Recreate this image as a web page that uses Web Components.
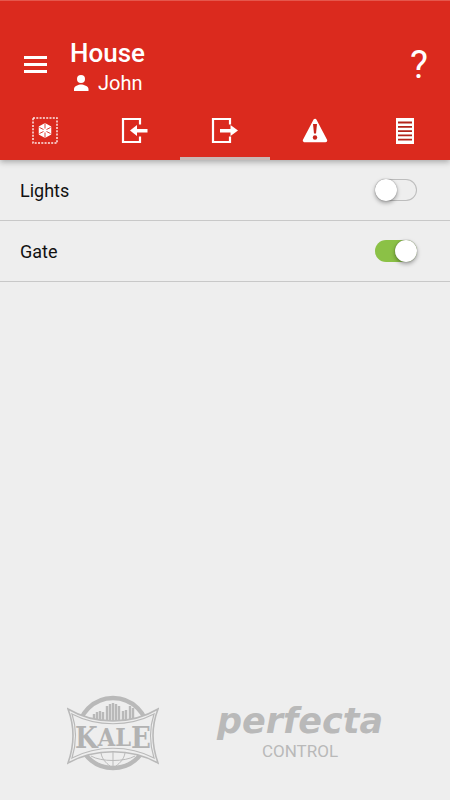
<!DOCTYPE html>
<html lang="en">
<head>
<meta charset="utf-8">
<meta name="viewport" content="width=device-width, initial-scale=1">
<title>Perfecta Control</title>
<style>
  body {
    margin: 0;
    background: #eeeeee;
    color: #111111;
    font-family: Roboto, 'Liberation Sans', sans-serif;
  }
</style>
</head>
<body>
<control-app>
  <app-header slot="header" heading="House" user="John"></app-header>
  <app-tabs slot="header" active="outputs"></app-tabs>
  <output-row label="Lights"></output-row>
  <output-row label="Gate" on></output-row>
  <brand-footer slot="footer"></brand-footer>
</control-app>

<script>
// Page frame: red bar, list, footer pushed to the bottom
class ControlApp extends HTMLElement {
  constructor() {
    super();
    this.attachShadow({ mode: 'open' });
    this.shadowRoot.innerHTML = `
      <style>
        :host {
          display: flex;
          flex-direction: column;
          min-height: 100vh;
        }
        header {
          background: #db2a1e;
          color: #ffffff;
          border-top: 1px solid #e5574c;
          box-shadow: 0 2px 6px rgba(0, 0, 0, 0.3);
        }
        main { flex: 1; }
      </style>
      <header><slot name="header"></slot></header>
      <main><slot></slot></main>
      <slot name="footer"></slot>
    `;
  }
}

class AppHeader extends HTMLElement {
  constructor() {
    super();
    this.attachShadow({ mode: 'open' });
  }

  connectedCallback() {
    this.shadowRoot.innerHTML = `
      <style>
        :host {
          display: flex;
          align-items: center;
          padding: 36px 22px 8px 20px;
        }
        button {
          display: flex;
          padding: 0;
          border: 0;
          background: none;
          color: inherit;
          font: inherit;
          cursor: pointer;
        }
        .titles { flex: 1; padding-left: 20px; }
        h1 {
          margin: 0;
          font-size: 26px;
          font-weight: 500;
          line-height: 32px;
        }
        p {
          display: flex;
          align-items: center;
          gap: 6px;
          margin: 0;
          font-size: 20px;
          line-height: 28px;
        }
        .help {
          padding-bottom: 4px;
          font-size: 38px;
          line-height: 44px;
        }
      </style>
      <button type="button" aria-label="Menu">
        <svg width="30" height="30" viewBox="0 0 30 30" fill="currentColor">
          <path d="M4 4h23v3H4zM4 11h23v3H4zM4 18h23v3H4z"/>
        </svg>
      </button>
      <div class="titles">
        <h1>${this.getAttribute('heading')}</h1>
        <p>
          <svg width="22" height="22" viewBox="0 0 22 22" fill="currentColor" aria-hidden="true">
            <circle cx="11" cy="7" r="4"/>
            <path d="M4 19v-2c0-3 4.500-4.500 7-4.500s7.500 1.500 7.500 4.500v2z"/>
          </svg>
          <span>${this.getAttribute('user')}</span>
        </p>
      </div>
      <button type="button" class="help" aria-label="Help">?</button>
    `;
  }
}

const TABS = [
  {
    id: 'partitions',
    label: 'Partitions',
    icon: `
      <rect x="3" y="3" width="24" height="25" fill="none" stroke="#fff" stroke-width="1.500" stroke-dasharray="2 1.300" opacity="0.9"/>
      <path d="M15 9l5.500 3v7L15 22l-5.500-3v-7z" fill="#fff" stroke="#fff" stroke-width="1.500" stroke-linejoin="round"/>
      <path d="M15 8.500v5M15 17.500v5M9.500 12.500l4 2M16.500 16.500l4 2M20.500 12.500l-4 2M13.500 16.500l-4 2" stroke="#db2a1e" stroke-width="0.900"/>`,
  },
  {
    id: 'inputs',
    label: 'Inputs',
    icon: `
      <path d="M20 9.500V4H3v23h17v-5.500" fill="none" stroke="#fff" stroke-width="2.200"/>
      <path d="M10 15.500l7-5.500v4h10.500v3.500H17V21z" fill="#fff"/>`,
  },
  {
    id: 'outputs',
    label: 'Outputs',
    icon: `
      <path d="M20 9.500V4H3v23h17v-5.500" fill="none" stroke="#fff" stroke-width="2.200"/>
      <path d="M28 15.500l-7.500-5.500v4H10v3.500h10.500V21z" fill="#fff"/>`,
  },
  {
    id: 'troubles',
    label: 'Troubles',
    icon: `
      <path d="M15 5.500L4.500 25.500h21z" fill="#fff" stroke="#fff" stroke-width="3.500" stroke-linejoin="round"/>
      <path d="M13 9h4l-1 9.500h-2z" fill="#c9261c"/>
      <circle cx="15" cy="22.500" r="2.200" fill="#c9261c"/>`,
  },
  {
    id: 'events',
    label: 'Events',
    icon: `
      <path d="M6 3h18v26H6z" fill="#fff"/>
      <path d="M8 7.500h14M8 11.800h14M8 16.100h14M8 20.400h14M8 24.700h14" stroke="#b3241b" stroke-width="1.800"/>`,
  },
];

class AppTabs extends HTMLElement {
  constructor() {
    super();
    this.attachShadow({ mode: 'open' });
  }

  connectedCallback() {
    const active = this.getAttribute('active');
    this.shadowRoot.innerHTML = `
      <style>
        :host { display: block; }
        nav { display: flex; }
        button {
          flex: 1;
          display: flex;
          justify-content: center;
          padding: 10px 0;
          border: 0;
          border-bottom: 3px solid transparent;
          background: none;
          cursor: pointer;
        }
        button[aria-selected="true"] { border-bottom-color: #c9b8b5; }
      </style>
      <nav role="tablist">
        ${TABS.map((t) => `
          <button type="button" role="tab" aria-label="${t.label}" aria-selected="${t.id === active}">
            <svg width="30" height="32" viewBox="0 0 30 32">${t.icon}</svg>
          </button>`).join('')}
      </nav>
    `;
    this.shadowRoot.querySelectorAll('button').forEach((btn, i, all) => {
      btn.addEventListener('click', () => {
        all.forEach((b) => b.setAttribute('aria-selected', String(b === btn)));
      });
    });
  }
}

class OutputRow extends HTMLElement {
  constructor() {
    super();
    this.attachShadow({ mode: 'open' });
  }

  connectedCallback() {
    this.shadowRoot.innerHTML = `
      <style>
        :host { display: block; border-bottom: 1px solid #c8c8c8; }
        label {
          display: flex;
          align-items: center;
          justify-content: space-between;
          min-height: 60px;
          padding: 0 33px 0 20px;
          font-size: 18px;
        }
        input {
          appearance: none;
          display: flex;
          box-sizing: border-box;
          width: 42px;
          height: 22px;
          margin: 0;
          border-radius: 11px;
          box-shadow: inset 0 0 0 1px #bdbdbd;
          cursor: pointer;
        }
        input::before {
          content: '';
          width: 22px;
          height: 22px;
          border-radius: 50%;
          background: #ffffff;
          box-shadow: 0 0 1px rgba(0, 0, 0, 0.5), 0 2px 4px rgba(0, 0, 0, 0.35);
        }
        input:checked {
          justify-content: flex-end;
          background: #8bc146;
          box-shadow: none;
        }
      </style>
      <label>
        <span>${this.getAttribute('label')}</span>
        <input type="checkbox" role="switch" ${this.hasAttribute('on') ? 'checked' : ''}>
      </label>
    `;
  }
}

class BrandFooter extends HTMLElement {
  constructor() {
    super();
    this.attachShadow({ mode: 'open' });
    // skyline bars: x, top
    const bars = [
      [27, 20], [30, 18], [33, 17], [36, 18], [40, 12], [43, 10], [46, 9],
      [49, 10], [52, 12], [56, 17], [59, 16], [63, 12], [66, 14],
    ].map(([x, y]) => `M${x} ${y}V30`).join('');

    this.shadowRoot.innerHTML = `
      <style>
        :host {
          display: flex;
          justify-content: center;
          align-items: center;
          gap: 58px;
          padding: 0 20px 28px;
          color: #b9b9b9;
        }
        .product {
          padding-bottom: 6px;
          text-align: center;
        }
        .name {
          font: italic bold 35px/41px 'DejaVu Sans', sans-serif;
        }
        .sub { font-size: 17px; line-height: 18px; }
      </style>
      <svg width="92" height="78" viewBox="0 0 92 78" role="img" aria-label="Kale">
        <circle cx="46" cy="39" r="35" fill="none" stroke="#b9b9b9" stroke-width="4.500"/>
        <path d="${bars}" stroke="#b9b9b9" stroke-width="2.400"/>
        <path d="M1 15C28 31 64 31 91 15Q81 41 91 69C64 54 28 54 1 69Q11 41 1 15z"
          fill="#eeeeee" stroke="#b9b9b9" stroke-width="1.600"/>
        <path d="M5 20C30 33 62 33 87 20Q80 41 87 64C62 51 30 51 5 64Q12 41 5 20z"
          fill="none" stroke="#b9b9b9" stroke-width="1.200"/>
        <path d="M24 62c10 6 34 6 44 0M46 58v14M34 59c1 6 5 10 9 13M58 59c-1 6-5 10-9 13"
          fill="none" stroke="#b9b9b9" stroke-width="1"/>
        <text x="46" y="54" text-anchor="middle" fill="#b2b2b2" font-weight="bold"
          font-family="'DejaVu Serif Condensed', 'DejaVu Serif', serif"><tspan font-size="29">K</tspan><tspan font-size="25" dy="-2">AL</tspan><tspan font-size="29" dy="2">E</tspan></text>
      </svg>
      <div class="product">
        <div class="name">perfecta</div>
        <div class="sub">CONTROL</div>
      </div>
    `;
  }
}

customElements.define('control-app', ControlApp);
customElements.define('app-header', AppHeader);
customElements.define('app-tabs', AppTabs);
customElements.define('output-row', OutputRow);
customElements.define('brand-footer', BrandFooter);
</script>
</body>
</html>
